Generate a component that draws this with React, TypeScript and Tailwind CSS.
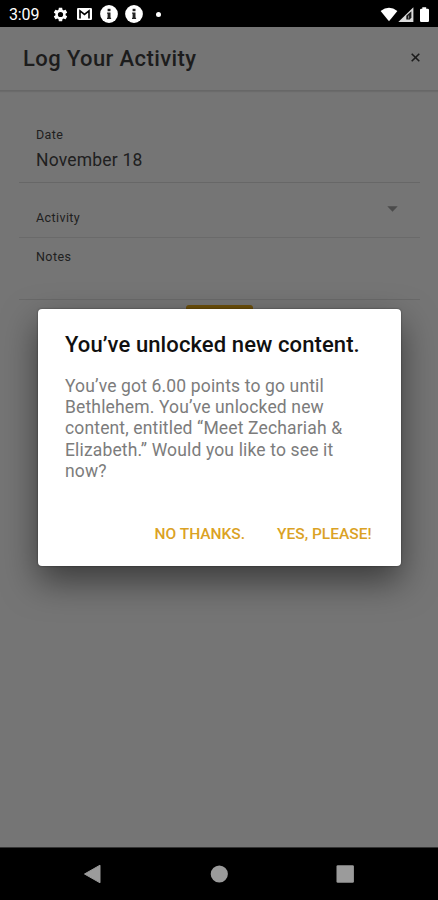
import React from "react";

function StatusBar() {
  return (
    <div className="flex h-[27px] items-center bg-black pl-[9px] pr-[8px] text-white">
      <span className="mt-[2px] w-[42.5px] text-[16px] leading-none tracking-[-0.15px] whitespace-nowrap">3:09</span>
      <svg className="mt-px h-[17px] w-[17px]" viewBox="0 0 24 24" fill="currentColor">
        <path fillRule="evenodd" d="M19.14 12.94c.04-.3.06-.61.06-.94 0-.32-.02-.64-.07-.94l2.03-1.58c.18-.14.23-.41.12-.61l-1.92-3.32c-.12-.22-.37-.29-.59-.22l-2.39.96c-.5-.38-1.03-.7-1.62-.94l-.36-2.54c-.04-.24-.24-.41-.48-.41h-3.84c-.24 0-.43.17-.47.41l-.36 2.54c-.59.24-1.13.57-1.62.94l-2.39-.96c-.22-.08-.47 0-.59.22L2.74 8.87c-.12.21-.08.47.12.61l2.03 1.58c-.05.3-.09.63-.09.94s.02.64.07.94l-2.03 1.58c-.18.14-.23.41-.12.61l1.92 3.32c.12.22.37.29.59.22l2.39-.96c.5.38 1.03.7 1.62.94l.36 2.54c.05.24.24.41.48.41h3.84c.24 0 .44-.17.47-.41l.36-2.54c.59-.24 1.13-.56 1.62-.94l2.39.96c.22.08.47 0 .59-.22l1.92-3.32c.12-.22.07-.47-.12-.61l-2.01-1.58zM12 15.7A3.7 3.7 0 1 1 12 8.3a3.7 3.7 0 0 1 0 7.4z" />
      </svg>
      <svg className="ml-[8.5px] mt-px h-[12px] w-[15px]" viewBox="0 0 15 12">
        <rect width="15" height="12" rx="1.3" fill="#fff" />
        <path d="M3 10.4V2.9l4.5 3.5L12 2.9v7.5" fill="none" stroke="#000" strokeWidth="1.6" />
      </svg>
      <InfoIcon className="ml-[8px]" />
      <InfoIcon className="ml-[7px]" />
      <span className="ml-[13px] mt-px h-[5px] w-[5px] rounded-full bg-white" />
      <svg className="ml-auto mt-px h-[15px] w-[50px]" viewBox="0 0 50 15">
        <path d="M0.6 4Q9 -2.4 17.4 4L9 14.2Z" fill="#fff" />
        <path d="M18.3 15L33.4 0.3V15Z" fill="#dcdcdc" />
        <path d="M26.3 12.6V8.8L31.4 4.2V10.5L29.8 12.6Z" fill="#1a1a1a" />
        <path d="M28.6 8.6V11.6" stroke="#888" strokeWidth="1" />
        <path d="M40 3Q40 1.8 41.2 1.8H42.3V0.3H46.2V1.8H47.8Q49 1.8 49 3V13.8Q49 15 47.8 15H41.2Q40 15 40 13.8Z" fill="#fff" />
      </svg>
    </div>
  );
}

function InfoIcon({ className }: { className: string }) {
  return (
    <svg className={`mt-px h-[18px] w-[18px] ${className}`} viewBox="0 0 18 18">
      <circle cx="9" cy="9" r="8.9" fill="#fff" />
      <rect x="7.6" y="3.8" width="2.9" height="2.4" fill="#222" />
      <path d="M7.1 7.4h3.4v5.3h.6v1.4H7v-1.4h.6V8.8h-.5z" fill="#222" />
    </svg>
  );
}

function Header() {
  return (
    <header className="flex h-[64px] items-center justify-between border-b border-[#676767] pl-[23px] pr-[18px] shadow-[0_1px_1px_rgba(0,0,0,0.08)]">
      <h1 className="text-[22px] font-medium leading-none tracking-[0.4px] whitespace-nowrap text-[#1c1c1c]">Log Your Activity</h1>
      <svg className="mt-[-3px] h-[9px] w-[9px]" viewBox="0 0 9 9" stroke="#1c1c1c" strokeWidth="1.6">
        <path d="M.7.7l7.6 7.6M8.3.7L.7 8.3" />
      </svg>
    </header>
  );
}

function ActivityForm() {
  return (
    <main className="flex flex-1 flex-col pl-[19px] pr-[18px] text-[12.5px] leading-[16px] text-[#202020]">
      <div className="h-[92px] border-b border-[#676767] pl-[17px] pt-[36px]">
        <div className="tracking-[0.35px]">Date</div>
        <div className="mt-[6px] text-[17.5px] leading-[22px] tracking-[0.2px]">November 18</div>
      </div>
      <div className="flex h-[55px] justify-between border-b border-[#6a6a6a] pl-[17px] pr-[22px]">
        <span className="mt-[27px] tracking-[0.4px]">Activity</span>
        <svg className="mt-[23px] h-[6px] w-[11px]" viewBox="0 0 11 6">
          <path d="M.3.3H10.7L5.5 5.8Z" fill="#4b4b4b" />
        </svg>
      </div>
      <div className="h-[62px] border-b border-[#696969] pl-[17px] pt-[11px] tracking-[0.45px]">Notes</div>
      <div className="mx-auto mt-[5px] h-[36px] w-[67px] rounded-[3px] bg-[#6b4f0b]" />
    </main>
  );
}

function NavigationBar() {
  return (
    <nav className="flex h-[53px] items-center border-t border-[#333] bg-black pl-[84px] pb-px">
      <svg className="h-[20px] w-[272px]" viewBox="0 0 272 20" fill="#9b9b9b">
        <path d="M.5 10L16 1.2V18.8Z" stroke="#9b9b9b" strokeLinejoin="round" />
        <circle cx="135.3" cy="10" r="8.6" />
        <rect x="252.5" y="1.3" width="17.4" height="17.4" rx="1.3" />
      </svg>
    </nav>
  );
}

function UnlockedDialog() {
  return (
    <div className="absolute left-[38px] top-[309px] flex h-[257px] w-[363px] flex-col rounded-[4px] bg-white px-[27px] shadow-[0_0_2px_rgba(0,0,0,0.5),0_15px_35px_rgba(0,0,0,0.5)]" role="dialog">
      <h2 className="mt-[23px] text-[22px] font-medium leading-[26px] tracking-[0.1px] whitespace-nowrap text-[#101010]">You’ve unlocked new content.</h2>
      <p className="mt-[18px] text-[17.5px] leading-[21.2px] tracking-[0.15px] whitespace-nowrap text-[#7c7c7c]">
        You’ve got 6.00 points to go until<br />
        Bethlehem. You’ve unlocked new<br />
        content, entitled “Meet Zechariah &amp;<br />
        Elizabeth.” Would you like to see it<br />
        now?
      </p>
      <div className="mt-[42px] flex justify-end gap-[32px] pr-[2.5px] text-[15.5px] font-medium leading-[20px] whitespace-nowrap text-[#dba224]">
        <button>NO THANKS.</button>
        <button>YES, PLEASE!</button>
      </div>
    </div>
  );
}

export default function App() {
  return (
    <div className="relative flex h-[900px] w-[438px] flex-col overflow-hidden bg-[#757575] font-[Roboto,sans-serif]">
      <StatusBar />
      <Header />
      <ActivityForm />
      <UnlockedDialog />
      <div className="relative">
        <NavigationBar />
      </div>
    </div>
  );
}
